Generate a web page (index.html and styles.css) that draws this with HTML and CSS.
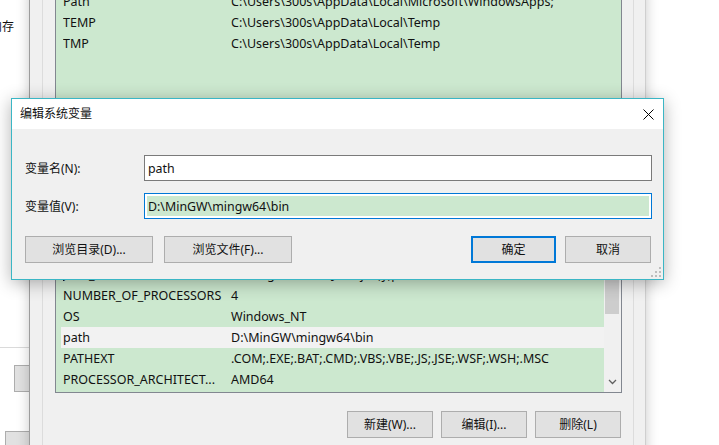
FILE: index.html
```html
<!DOCTYPE html>
<html lang="zh-CN">
<head>
<meta charset="utf-8">
<title>编辑系统变量</title>
<link rel="stylesheet" href="styles.css">
</head>
<body>
<div class="desk">
  <div class="leftwin">
    <div class="lw-text">内存</div>
    <div class="lw-line"></div>
    <div class="lw-btn"></div>
    <div class="lw-btn lw-btn2"></div>
  </div>

  <div class="envwin">
    <div class="group">
      <div class="list list-user">
        <div class="rows">
          <div class="row"><span class="c1">Path</span><span class="c2">C:\Users\300s\AppData\Local\Microsoft\WindowsApps;</span></div>
          <div class="row"><span class="c1">TEMP</span><span class="c2">C:\Users\300s\AppData\Local\Temp</span></div>
          <div class="row"><span class="c1">TMP</span><span class="c2">C:\Users\300s\AppData\Local\Temp</span></div>
        </div>
      </div>
      <div class="list list-sys">
        <div class="rows">
          <div class="row"></div>
          <div class="row"></div>
          <div class="row"></div>
          <div class="row"></div>
          <div class="row"><span class="c1">JAVA_HOME</span><span class="c2">C:\Program Files\Java\jdk;y;p</span></div>
          <div class="row"><span class="c1">NUMBER_OF_PROCESSORS</span><span class="c2">4</span></div>
          <div class="row"><span class="c1">OS</span><span class="c2">Windows_NT</span></div>
          <div class="row row-sel"><span class="c1">path</span><span class="c2">D:\MinGW\mingw64\bin</span></div>
          <div class="row"><span class="c1">PATHEXT</span><span class="c2">.COM;.EXE;.BAT;.CMD;.VBS;.VBE;.JS;.JSE;.WSF;.WSH;.MSC</span></div>
          <div class="row"><span class="c1">PROCESSOR_ARCHITECT...</span><span class="c2">AMD64</span></div>
        </div>
        <div class="vscroll">
          <div class="thumb"></div>
          <div class="arrow">
            <svg width="9" height="6" viewBox="0 0 9 6"><path d="M1 1 L4.5 4.5 L8 1" fill="none" stroke="#606060" stroke-width="1.3"/></svg>
          </div>
        </div>
      </div>
      <div class="env-buttons">
        <button class="btn env-btn">新建(W)...</button>
        <button class="btn env-btn">编辑(I)...</button>
        <button class="btn env-btn">删除(L)</button>
      </div>
    </div>
  </div>

  <div class="dialog">
    <div class="titlebar">
      <span class="title">编辑系统变量</span>
      <span class="close">
        <svg width="11" height="11" viewBox="0 0 11 11"><path d="M0.5 0.5 L10.5 10.5 M10.5 0.5 L0.5 10.5" stroke="#000" stroke-width="1"/></svg>
      </span>
    </div>
    <div class="dbody">
      <div class="field">
        <span class="label">变量名(N):</span>
        <div class="input"><span class="val">path</span></div>
      </div>
      <div class="field field2">
        <span class="label">变量值(V):</span>
        <div class="input input-focus"><span class="val val-sel">D:\MinGW\mingw64\bin</span></div>
      </div>
      <div class="dbuttons">
        <div class="dleft">
          <button class="btn wide">浏览目录(D)...</button>
          <button class="btn wide">浏览文件(F)...</button>
        </div>
        <div class="dright">
          <button class="btn ok">确定</button>
          <button class="btn cancel">取消</button>
        </div>
      </div>
    </div>
    <svg class="grip" width="10" height="10" viewBox="0 0 10 10">
      <rect x="8" y="0" width="2" height="2" fill="#bdbdbd"/>
      <rect x="8" y="4" width="2" height="2" fill="#bdbdbd"/>
      <rect x="4" y="4" width="2" height="2" fill="#bdbdbd"/>
      <rect x="8" y="8" width="2" height="2" fill="#bdbdbd"/>
      <rect x="4" y="8" width="2" height="2" fill="#bdbdbd"/>
      <rect x="0" y="8" width="2" height="2" fill="#bdbdbd"/>
    </svg>
  </div>
</div>
</body>
</html>
```

FILE: styles.css
```css
* { box-sizing: border-box; }
html, body {
  margin: 0;
  padding: 0;
  background: #ffffff;
}
body {
  width: 719px;
  height: 445px;
  overflow: hidden;
  font-family: "Noto Sans", "Noto Sans CJK SC", sans-serif;
  font-size: 12px;
  color: #111;
}
.desk {
  position: relative;
  width: 719px;
  height: 445px;
  overflow: hidden;
  background: #fff;
}

/* left background window */
.leftwin {
  width: 29px;
  height: 445px;
  background: #fff;
  overflow: hidden;
}
.lw-text {
  margin-left: -10px;
  padding-top: 19px;
  line-height: 16px;
  white-space: nowrap;
}
.lw-line {
  margin-top: 312px;
  height: 1px;
  background: #dadada;
}
.lw-btn {
  margin-top: 17px;
  margin-left: 14px;
  width: 40px;
  height: 27px;
  background: #e1e1e1;
  border: 1px solid #adadad;
}
.lw-btn2 {
  margin-top: 39px;
  margin-left: 5px;
}

/* environment variables window */
.envwin {
  position: absolute;
  left: 29px;
  top: -10px;
  width: 617px;
  height: 470px;
  background: #f0f0f0;
  border-left: 1px solid #9c9c9c;
  border-right: 1px solid #cfcfcf;
  box-shadow: 0 0 12px rgba(0, 0, 0, 0.22);
}
.group {
  margin: 0 11px 0 12px;
  height: 100%;
  border-left: 1px solid #dcdcdc;
  border-right: 1px solid #dcdcdc;
  padding: 0 11px 0 12px;
  display: flex;
  flex-direction: column;
}
.list {
  border: 1px solid #828790;
  background: #cce8cf;
  display: flex;
}
.list-user {
  height: 180px;
}
.list-sys {
  margin-top: 9px;
  height: 214px;
}
.rows {
  flex: 1;
  display: flex;
  flex-direction: column;
}
.row {
  height: 21px;
  flex: none;
  margin-left: 5px;
  padding-left: 2px;
  display: flex;
  align-items: center;
  white-space: nowrap;
  overflow: hidden;
  font-size: 12.5px;
}
.row-sel {
  background: #f2f2f2;
}
.c1 {
  width: 168px;
  flex: none;
  overflow: hidden;
}
.c2 {
  flex: none;
}
.vscroll {
  width: 17px;
  flex: none;
  background: #f0f0f0;
  display: flex;
  flex-direction: column;
  justify-content: space-between;
}
.thumb {
  margin: 86px 2px 0 1px;
  height: 48px;
  background: #cdcdcd;
}
.arrow {
  height: 18px;
  display: flex;
  align-items: center;
  justify-content: center;
  padding-bottom: 2px;
}
.env-buttons {
  margin-top: 18px;
  display: flex;
  justify-content: flex-end;
  gap: 8px;
  padding-right: 1px;
}
.btn {
  font-family: "Noto Sans", "Noto Sans CJK SC", sans-serif;
  font-size: 12px;
  color: #111;
  background: #e1e1e1;
  border: 1px solid #adadad;
  height: 27px;
  padding: 0;
  margin: 0;
  display: flex;
  align-items: center;
  justify-content: center;
  line-height: 1;
}
.env-btn {
  width: 86px;
}

/* front dialog */
.dialog {
  position: absolute;
  left: 11px;
  top: 98px;
  width: 653px;
  height: 182px;
  background: #f0f0f0;
  border: 1px solid #3bb6c5;
  box-shadow: 0 3px 16px rgba(0, 0, 0, 0.3);
  display: flex;
  flex-direction: column;
}
.titlebar {
  height: 30px;
  flex: none;
  background: #fff;
  display: flex;
  align-items: center;
  justify-content: space-between;
  padding: 0 9px 0 8px;
}
.title {
  line-height: 16px;
}
.close {
  display: flex;
  width: 11px;
  height: 11px;
}
.dbody {
  padding: 26px 11px 0 13px;
  display: flex;
  flex-direction: column;
}
.field {
  display: flex;
  align-items: center;
}
.field2 {
  margin-top: 12px;
}
.label {
  width: 119px;
  flex: none;
}
.input {
  flex: 1;
  height: 26px;
  background: #fff;
  border: 1px solid #7a7a7a;
  padding: 2px;
  display: flex;
  align-items: stretch;
}
.input-focus {
  border-color: #0078d7;
}
.val {
  flex: 1;
  display: flex;
  align-items: center;
  padding-left: 1px;
  white-space: nowrap;
  font-size: 12.4px;
}
.val-sel {
  background: #cce8cf;
}
.dbuttons {
  margin-top: 17px;
  display: flex;
  justify-content: space-between;
  padding-right: 1px;
}
.dleft, .dright {
  display: flex;
}
.dleft { gap: 11px; }
.dright { gap: 9px; }
.wide { width: 128px; }
.ok {
  width: 85px;
  border: 2px solid #0078d7;
}
.cancel { width: 86px; }
.grip {
  position: absolute;
  right: 2px;
  bottom: 2px;
}
```
